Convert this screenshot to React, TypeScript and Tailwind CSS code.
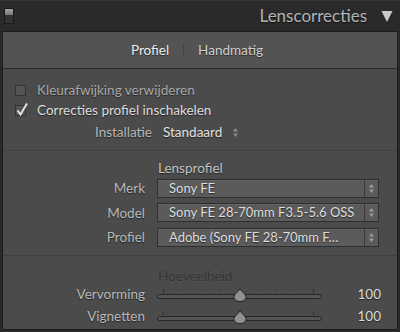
import React from 'react';

const shadow = '[text-shadow:0_1px_1px_rgba(0,0,0,0.55)]';

const UpDown: React.FC<{ className?: string }> = ({ className }) => (
  <svg width="7" height="11" viewBox="0 0 7 11" className={className}>
    <path d="M3.5 1 L6 4.5 H1 Z" fill="currentColor" />
    <path d="M3.5 10 L6 6.5 H1 Z" fill="currentColor" />
  </svg>
);

const Select: React.FC<{ label: string; value: string }> = ({ label, value }) => (
  <div className="flex items-center h-[24.5px]">
    <div className={`w-[142px] text-right text-[#b8b8b8] ${shadow}`}>{label}</div>
    <div className="ml-[12px] flex h-[19px] w-[222px] border border-[#2f2f2f] bg-[#5b5b5b] shadow-[inset_0_1px_0_rgba(255,255,255,0.06)]">
      <div className={`flex-1 pl-[11px] text-[13px] leading-[17px] text-[#dedede] truncate ${shadow}`}>{value}</div>
      <div className="w-[14px] border-l border-[#3a3a3a] flex items-center justify-center text-[#9a9a9a]">
        <UpDown />
      </div>
    </div>
  </div>
);

const Slider: React.FC<{ label: string; value: number }> = ({ label, value }) => (
  <div className="flex items-center h-[22px]">
    <div className={`w-[142px] text-right text-[#b8b8b8] ${shadow}`}>{label}</div>
    <div className="ml-[12px] relative w-[165px] h-[20px]">
      <div className="absolute left-[6px] right-[8px] top-[4px] flex justify-between">
        {Array.from({ length: 9 }).map((_, i) => (
          <div key={i} className={`w-px ${i === 0 || i === 8 ? 'h-[4px] bg-[#2e2e2e]' : 'h-[2px] bg-[#3a3a3a]'}`} />
        ))}
      </div>
      <div className="absolute left-0 right-0 top-[9px] h-[5px] rounded-full bg-[#555] border border-[#262626]" />
      <svg className="absolute left-[76px] top-[3px]" width="14" height="14" viewBox="0 0 14 14">
        <path d="M7 0.8 C8 3 13.2 6.5 13.2 9 A6.2 4.6 0 0 1 0.8 9 C0.8 6.5 6 3 7 0.8 Z" fill="#909090" stroke="#1f1f1f" strokeWidth="1" />
      </svg>
    </div>
    <div className={`flex-1 text-right pr-[16px] text-[#dcdcdc] ${shadow}`}>{value}</div>
  </div>
);

const App: React.FC = () => {
  return (
    <div className="w-[400px] h-[332px] bg-[#2a2a2a] flex flex-col text-[13.5px] overflow-hidden" style={{ fontFamily: 'Lato, "Open Sans", sans-serif' }}>
      {/* header */}
      <div className="h-[31px] border-t border-[#363636] flex items-center pl-[4px] pr-[7px]">
        <div className="w-[10px] h-[16px] border border-[#1a1a1a] bg-[#333] flex flex-col">
          <div className="h-[6px] bg-gradient-to-b from-[#a0a0a0] to-[#7a7a7a]" />
        </div>
        <div className={`ml-auto text-[17px] text-[#b3b3b3] ${shadow}`}>Lenscorrecties</div>
        <svg className="ml-[14px]" width="12" height="13" viewBox="0 0 12 13">
          <path d="M0.5 1 H11.5 L6 12 Z" fill="#c9c9c9" />
        </svg>
      </div>

      {/* panel */}
      <div className="flex-1 mx-[2px] mb-[2px] border border-[#1c1c1c] bg-[#4b4b4b] flex flex-col">
        <div className="h-[37px] bg-[#535353] border-b border-[#2b2b2b] flex items-center justify-center gap-[14px] pr-[6px]">
          <span className={`text-[#eeeeee] ${shadow}`}>Profiel</span>
          <span className="w-px h-[12px] bg-[#444]" />
          <span className={`text-[#cfcfcf] ${shadow}`}>Handmatig</span>
        </div>

        <div className="pt-[11px] pb-[6px] border-b border-[#3f3f3f]">
          <div className="flex items-center h-[20px] pl-[12px]">
            <div className="w-[11px] h-[11px] border border-[#333] bg-[#555]" />
            <span className={`ml-[11px] text-[#a9a9a9] ${shadow}`}>Kleurafwijking verwijderen</span>
          </div>
          <div className="flex items-center h-[20px] pl-[12px]">
            <div className="relative w-[11px] h-[11px] border border-[#333] bg-[#555]">
              <svg className="absolute left-0 -top-[4px]" width="13" height="15" viewBox="0 0 13 15">
                <path d="M1.5 8.5 L4.5 12.5 L11 1.5" fill="none" stroke="#e2e2e2" strokeWidth="2" />
              </svg>
            </div>
            <span className={`ml-[11px] text-[#dedede] ${shadow}`}>Correcties profiel inschakelen</span>
          </div>
          <div className="flex items-center h-[24px]">
            <div className={`w-[149px] text-right text-[#b8b8b8] ${shadow}`}>Installatie</div>
            <div className={`ml-[11px] text-[#e2e2e2] ${shadow}`}>Standaard</div>
            <UpDown className="ml-[10px] text-[#8a8a8a]" />
          </div>
        </div>

        <div className="pt-[7px] pb-[5px] border-b border-[#3f3f3f]">
          <div className={`pl-[155px] h-[18px] text-[#c2c2c2] ${shadow}`}>Lensprofiel</div>
          <Select label="Merk" value="Sony FE" />
          <Select label="Model" value="Sony FE 28-70mm F3.5-5.6 OSS" />
          <Select label="Profiel" value="Adobe (Sony FE 28-70mm F…" />
        </div>

        <div className="pt-[10px]">
          <div className="pl-[155px] h-[18px] text-[#363636] [text-shadow:0_1px_0_rgba(255,255,255,0.06)]">Hoeveelheid</div>
          <Slider label="Vervorming" value={100} />
          <Slider label="Vignetten" value={100} />
        </div>
      </div>
    </div>
  );
};

export default App;
